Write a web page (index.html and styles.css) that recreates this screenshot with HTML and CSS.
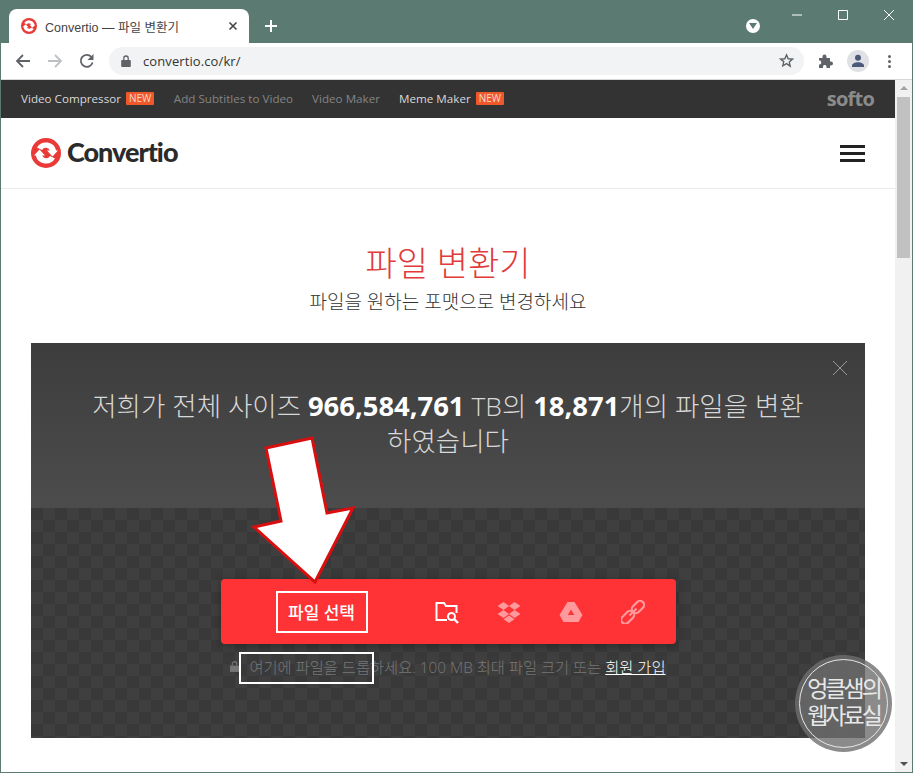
FILE: index.html
```html
<!DOCTYPE html>
<html lang="ko">
  <head>
    <meta charset="utf-8" />
    <title>Convertio — 파일 변환기</title>
    <link rel="stylesheet" href="styles.css">
  </head>

  <body>
    <svg class="defs" width="0" height="0">
      <symbol id="swirl" viewBox="0 0 30 30">
        <circle cx="15" cy="15" r="15" fill="#e93a37" />
        <path d="M6 9.500A10.500 10.500 0 0 1 25.200 12.500H27L21.500 18.500 16 12.500H18.800A4.300 4.300 0 0 0 11 12Z" fill="#fff" />
        <path d="M24 20.500A10.500 10.500 0 0 1 4.800 17.500H3L8.500 11.500 14 17.500H11.200A4.300 4.300 0 0 0 19 18Z" fill="#fff" />
      </symbol>
    </svg>

    <div class="window">
      <div class="tabstrip">
        <div class="tab">
          <svg class="tab-icon" width="16" height="16"><use href="#swirl" /></svg>
          <span class="tab-title">Convertio — 파일 변환기</span>
          <svg class="tab-close" width="10" height="10" viewBox="0 0 10 10"><path d="M1.500 1.500l7 7M8.500 1.500l-7 7" stroke="#444" stroke-width="1.600" /></svg>
        </div>
        <svg class="new-tab" width="12" height="12" viewBox="0 0 12 12"><path d="M6 0v12M0 6h12" stroke="#fff" stroke-width="2" /></svg>
        <div class="spacer"></div>
        <div class="media-dot"><svg width="8" height="6" viewBox="0 0 8 6"><path d="M0 0h8L4 6z" fill="#5b7b72" /></svg></div>
        <div class="win-controls">
          <svg width="46" height="30" viewBox="0 0 46 30"><path d="M18 15h10" stroke="#fff" /></svg>
          <svg width="46" height="30" viewBox="0 0 46 30"><path d="M18.500 10.500h9v9h-9z" stroke="#fff" fill="none" /></svg>
          <svg width="46" height="30" viewBox="0 0 46 30"><path d="M18 10l10 10M28 10L18 20" stroke="#fff" /></svg>
        </div>
      </div>

      <div class="toolbar">
        <svg class="nav-btn" width="16" height="16" viewBox="0 0 16 16"><path d="M15 8H2M8 2L2 8l6 6" stroke="#5f6368" stroke-width="1.800" fill="none" /></svg>
        <svg class="nav-btn" width="16" height="16" viewBox="0 0 16 16"><path d="M1 8h13M8 2l6 6-6 6" stroke="#bdc1c6" stroke-width="1.800" fill="none" /></svg>
        <svg class="nav-btn" width="16" height="16" viewBox="0 0 16 16"><path d="M13.600 9.500A6 6 0 1 1 12.300 3.800" stroke="#5f6368" stroke-width="1.800" fill="none" /><path d="M14.500 1v6h-6z" fill="#5f6368" /></svg>
        <div class="omnibox">
          <svg width="10" height="12" viewBox="0 0 10 12"><path d="M1 5h8a.8.8 0 0 1 .8.8v5.400a.8.8 0 0 1-.8.8H1a.8.8 0 0 1-.8-.8V5.800a.8.8 0 0 1 .8-.8z" fill="#5f6368" /><path d="M2.800 5V3.200a2.200 2.200 0 0 1 4.400 0V5" stroke="#5f6368" stroke-width="1.300" fill="none" /></svg>
          <span class="url">convertio.co/kr/</span>
          <svg class="star" width="15" height="15" viewBox="0 0 24 24"><path d="M12 3l2.700 6.200 6.800.6-5.100 4.500 1.500 6.700L12 17l-5.900 3.500 1.500-6.700L2.500 9.800l6.800-.6z" fill="none" stroke="#5f6368" stroke-width="2.200" /></svg>
        </div>
        <svg class="puzzle" width="16" height="16" viewBox="0 0 16 16"><path d="M1 5h3.500V3.500a2 2 0 0 1 4 0V5H12v3.500h1a2 2 0 0 1 0 4h-1V15H8.500v-1.500a1.800 1.800 0 0 0-3.500 0V15H1v-3.500h1a2.200 2.200 0 0 0 0-4H1z" fill="#5f6368" /></svg>
        <div class="avatar"><svg width="14" height="14" viewBox="0 0 14 14"><circle cx="7" cy="3.800" r="3" fill="#4a5a78" /><path d="M1 13v-1.500c0-2 3-3.300 6-3.300s6 1.300 6 3.300V13z" fill="#4a5a78" /></svg></div>
        <div class="kebab"><i></i><i></i><i></i></div>
      </div>

      <div class="viewport">
        <div class="page">
          <div class="softo-bar">
            <a class="softo-link">Video Compressor</a><span class="new-badge">NEW</span>
            <a class="softo-link muted">Add Subtitles to Video</a>
            <a class="softo-link muted">Video Maker</a>
            <a class="softo-link">Meme Maker</a><span class="new-badge">NEW</span>
            <span class="softo-logo">softo</span>
          </div>

          <header class="site-header">
            <svg width="30" height="30"><use href="#swirl" /></svg>
            <span class="brand">Convertio</span>
            <div class="burger"><i></i><i></i><i></i></div>
          </header>

          <div class="hero">
            <h1>파일 변환기</h1>
            <p>파일을 원하는 포맷으로 변경하세요</p>
          </div>

          <section class="panel">
            <div class="stats">
              <svg class="stats-close" width="16" height="16" viewBox="0 0 16 16"><path d="M1 1l14 14M15 1L1 15" stroke="#999" /></svg>
              <p>저희가 전체 사이즈 <b>966,584,761</b> TB의 <b>18,871</b>개의 파일을 변환하였습니다</p>
            </div>
            <div class="drop-zone">
              <div class="picker">
                <span class="picker-label">파일 선택</span>
                <div class="picker-icons">
                  <svg width="24" height="24" viewBox="0 0 24 24"><path d="M12 20H1.500V3h7.500l2 3h10.500v7" fill="none" stroke="#fff" stroke-width="2" /><circle cx="16.500" cy="16.500" r="3.500" fill="none" stroke="#fff" stroke-width="2" /><path d="M19 19l4 4" stroke="#fff" stroke-width="2.400" /></svg>
                  <svg class="dim" width="24" height="24" viewBox="0 0 24 24"><path d="M6.500 2L0.500 6l6 4-6 4 6 4 5.500-4 5.500 4 6-4-6-4 6-4-6-4L12 6zM12 6l5.500 4L12 14l-5.500-4zM6.500 19.300L12 23l5.500-3.700L12 15.500z" fill="#fff" fill-rule="evenodd" /></svg>
                  <svg class="dim" width="24" height="24" viewBox="0 0 24 24"><path d="M8.500 2h7l8 13-4 7H4.500l-4-7zM12 9.500L8.800 15h6.400z" fill="#fff" fill-rule="evenodd" /></svg>
                  <svg class="dim" width="24" height="24" viewBox="0 0 24 24"><g transform="rotate(-45 12 12)" fill="none" stroke="#fff" stroke-width="2.200"><rect x="-3" y="8" width="15" height="8" rx="4" /><rect x="12" y="8" width="14" height="8" rx="4" /><path d="M7 12h10" /></g></svg>
                </div>
              </div>
              <div class="drop-note">
                <svg width="9" height="11" viewBox="0 0 10 12"><path d="M0 5h10v7H0z" fill="#777" /><path d="M2.500 5V3.200a2.500 2.500 0 0 1 5 0V5" stroke="#777" stroke-width="1.400" fill="none" /></svg>
                <span>여기에 파일을 드롭하세요. 100 MB 최대 파일 크기 또는 <a>회원 가입</a></span>
              </div>
            </div>
          </section>
        </div>

        <div class="scrollbar">
          <div class="scroll-up"></div>
          <div class="scroll-thumb"></div>
          <div class="scroll-down"></div>
        </div>
      </div>

      <!-- annotations drawn over the screenshot -->
      <svg class="arrow" width="913" height="773" viewBox="0 0 913 773">
        <path d="M266 448L312 438 327 513 353 508 315 582 254 527 281 521Z" fill="#fff" stroke="#d90f0f" stroke-width="3" />
      </svg>
      <div class="mark mark-pick"></div>
      <div class="mark mark-drop"></div>
      <div class="stamp">
        <div class="stamp-ring">엉클샘의<br />웹자료실</div>
      </div>
    </div>
  </body>
</html>
```

FILE: styles.css
```css
* {
  box-sizing: border-box;
}

body {
  margin: 0;
  font-family: "Open Sans", "Noto Sans CJK KR", sans-serif;
}

.defs {
  position: absolute;
}

.window {
  position: relative;
  width: 913px;
  height: 773px;
  padding: 0 1px 1px;
  background: #5b7b72;
  display: flex;
  flex-direction: column;
  overflow: hidden;
}

/* tab strip */
.tabstrip {
  height: 43px;
  display: flex;
  align-items: flex-end;
  flex-shrink: 0;
}

.tab {
  width: 240px;
  height: 34px;
  margin-left: 8px;
  padding: 0 11px 0 12px;
  background: #fff;
  border-radius: 8px 8px 0 0;
  display: flex;
  align-items: center;
}

.tab-title {
  margin-left: 8px;
  flex: 1;
  font-size: 12.500px;
  color: #444;
  font-family: "Liberation Sans", "Noto Sans CJK KR", sans-serif;
}

.new-tab {
  margin: 0 0 11px 16px;
}

.spacer {
  flex: 1;
}

.media-dot {
  width: 14px;
  height: 14px;
  margin-bottom: 10px;
  border-radius: 50%;
  background: #fff;
  display: flex;
  align-items: center;
  justify-content: center;
}

.win-controls {
  display: flex;
  align-self: flex-start;
  margin-left: 14px;
}

.win-controls svg {
  display: block;
}

/* toolbar */
.toolbar {
  height: 37px;
  flex-shrink: 0;
  padding-left: 14px;
  background: #fff;
  border-bottom: 1px solid #d8d8d8;
  display: flex;
  align-items: center;
}

.nav-btn {
  margin-right: 16px;
}

.omnibox {
  width: 695px;
  height: 28px;
  margin-left: -2px;
  margin-top: -1px;
  padding: 0 10px 0 12px;
  background: #f1f3f4;
  border-radius: 14px;
  display: flex;
  align-items: center;
}

.url {
  margin-left: 12px;
  flex: 1;
  font-size: 13px;
  color: #333;
  letter-spacing: 0.1px;
}

.puzzle {
  margin-left: 14px;
}

.avatar {
  width: 22px;
  height: 22px;
  margin-left: 13px;
  border-radius: 50%;
  background: #dfe1e5;
  display: flex;
  align-items: center;
  justify-content: center;
}

.kebab {
  margin-left: 19px;
  display: flex;
  flex-direction: column;
  gap: 2px;
}

.kebab i {
  width: 3px;
  height: 3px;
  border-radius: 50%;
  background: #5f6368;
}

/* page */
.viewport {
  flex: 1;
  min-height: 0;
  display: flex;
  background: #fff;
}

.page {
  flex: 1;
  min-width: 0;
  overflow: hidden;
}

.softo-bar {
  height: 38px;
  padding: 0 21px 2px 20px;
  background: #333;
  display: flex;
  align-items: center;
}

.softo-link {
  font-size: 11.650px;
  color: #d9d9d9;
  white-space: nowrap;
}

.softo-link.muted {
  color: #858585;
  margin-right: 19px;
}

.new-badge {
  margin: 0 19.500px 0 5px;
  padding: 0 3px;
  height: 13px;
  line-height: 13px;
  background: #f0582c;
  border-radius: 1px;
  font-size: 10px;
  color: #f5d9c8;
}

.softo-logo {
  margin-left: auto;
  font-size: 20px;
  font-weight: 700;
  letter-spacing: -0.8px;
  color: #8b8b8b;
}

.site-header {
  height: 71px;
  padding: 0 30px;
  border-bottom: 1px solid #eaeaea;
  display: flex;
  align-items: center;
}

.brand {
  margin: 0 0 3px 6px;
  font-family: "Lato", sans-serif;
  font-size: 27px;
  font-weight: 900;
  letter-spacing: -1px;
  color: #2b2b2b;
}

.burger {
  margin-left: auto;
  display: flex;
  flex-direction: column;
  gap: 4px;
}

.burger i {
  width: 25px;
  height: 3px;
  background: #222;
}

.hero {
  height: 154px;
  padding-top: 50px;
  text-align: center;
}

.hero h1 {
  margin: 0;
  font-size: 34px;
  line-height: 48px;
  font-weight: 300;
  color: #e03a3a;
}

.hero p {
  margin: 3px 0 0;
  font-size: 19px;
  line-height: 24px;
  font-weight: 300;
  color: #333;
}

.panel {
  margin: 0 30px;
}

.stats {
  position: relative;
  height: 165px;
  padding-top: 45px;
  background: linear-gradient(#3d3d3d, #4c4c4c);
  display: flex;
  justify-content: center;
}

.stats p {
  margin: 0;
  width: 720px;
  font-size: 26.500px;
  line-height: 35px;
  font-weight: 300;
  text-align: center;
  color: #d8d8d8;
}

.stats b {
  font-size: 27.400px;
  font-weight: 700;
  color: #fff;
}

.stats-close {
  position: absolute;
  top: 17px;
  right: 17px;
}

.drop-zone {
  height: 230px;
  padding-top: 71px;
  background-color: #393939;
  background-image: conic-gradient(#3f3f3f 25%, #393939 0 50%, #3f3f3f 0 75%, #393939 0);
  background-size: 24px 24px;
}

.picker {
  width: 455px;
  height: 65px;
  margin: 0 auto;
  background: #ff3236;
  border-radius: 4px;
  box-shadow: 0 2px 10px rgba(0, 0, 0, 0.3);
  display: flex;
  align-items: center;
}

.picker-label {
  width: 202px;
  text-align: center;
  font-size: 17px;
  font-weight: 500;
  color: #fff;
}

.picker-icons {
  display: flex;
  gap: 38px;
  margin-left: 12px;
}

.picker-icons svg.dim {
  opacity: 0.5;
}

.drop-note {
  margin-top: 11px;
  display: flex;
  justify-content: center;
  align-items: center;
  gap: 10px;
  font-size: 15.300px;
  font-weight: 300;
  color: #777;
}

.drop-note a {
  color: #fff;
  text-decoration: underline;
}

.scrollbar {
  width: 17px;
  background: #f1f1f1;
  display: flex;
  flex-direction: column;
  align-items: center;
}

.scroll-up,
.scroll-down {
  width: 0;
  height: 0;
  border-left: 4px solid transparent;
  border-right: 4px solid transparent;
}

.scroll-up {
  margin-top: 6px;
  border-bottom: 4px solid #a3a3a3;
}

.scroll-thumb {
  width: 13px;
  height: 161px;
  margin-top: 7px;
  background: #c1c1c1;
}

.scroll-down {
  margin-top: auto;
  margin-bottom: 6px;
  border-top: 4px solid #505050;
}

/* overlays */
.arrow {
  position: absolute;
  left: 0;
  top: 0;
  pointer-events: none;
}

.mark {
  position: absolute;
  border: 2px solid #fff;
}

.mark-pick {
  left: 276px;
  top: 591px;
  width: 92px;
  height: 42px;
}

.mark-drop {
  left: 239px;
  top: 652px;
  width: 135px;
  height: 32px;
}

.stamp {
  position: absolute;
  left: 795px;
  top: 655px;
  width: 97px;
  height: 97px;
  padding: 4px;
  border-radius: 50%;
  background: rgba(110, 110, 110, 0.8);
}

.stamp-ring {
  height: 100%;
  padding-bottom: 4px;
  border: 1px solid #e8e8e8;
  border-radius: 50%;
  display: flex;
  align-items: center;
  justify-content: center;
  text-align: center;
  font-size: 23px;
  line-height: 27px;
  font-weight: 400;
  letter-spacing: -3px;
  color: #e8e8e8;
}
```
